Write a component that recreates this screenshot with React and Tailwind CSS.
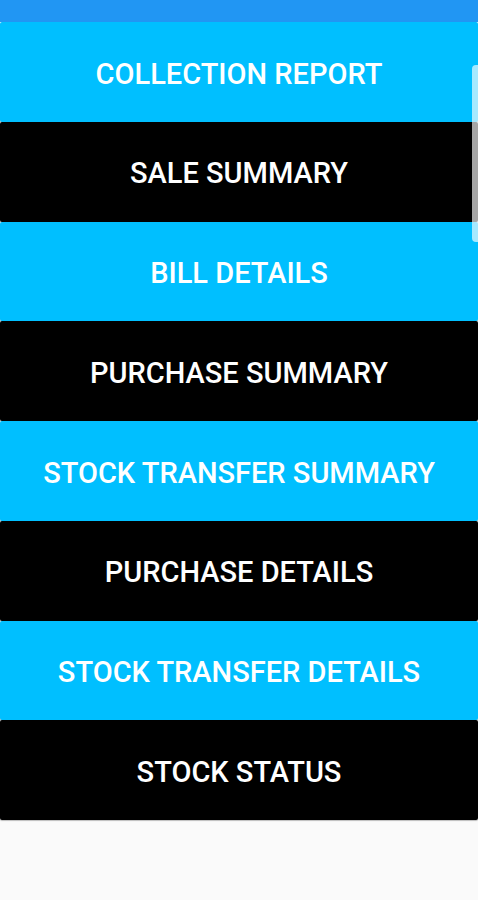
const items = [
  { label: "COLLECTION REPORT", dark: false },
  { label: "SALE SUMMARY", dark: true },
  { label: "BILL DETAILS", dark: false },
  { label: "PURCHASE SUMMARY", dark: true },
  { label: "STOCK TRANSFER SUMMARY", dark: false },
  { label: "PURCHASE DETAILS", dark: true },
  { label: "STOCK TRANSFER DETAILS", dark: false },
  { label: "STOCK STATUS", dark: true },
];

const App = () => {
  return (
    <div
      className="relative min-h-[900px] bg-[#fafafa]"
      style={{ fontFamily: "Roboto, 'Liberation Sans', sans-serif" }}
    >
      {/* status / app bar strip */}
      <div className="h-[22px] bg-[#2196f3]" />

      <div className="flex flex-col">
        {items.map((item) => (
          <button
            key={item.label}
            className={`flex h-[99.75px] w-full items-center justify-center rounded-[2px] pt-[5px] text-[29px] font-medium text-white shadow-[0_1px_1px_rgba(0,0,0,0.25)] ${
              item.dark ? "bg-black" : "bg-[#00bfff]"
            }`}
          >
            {item.label}
          </button>
        ))}
      </div>

      {/* scrollbar thumb */}
      <div className="absolute right-0 top-[65px] h-[177px] w-[6px] rounded-l-[4px] bg-white/65" />
    </div>
  );
};

export default App;
